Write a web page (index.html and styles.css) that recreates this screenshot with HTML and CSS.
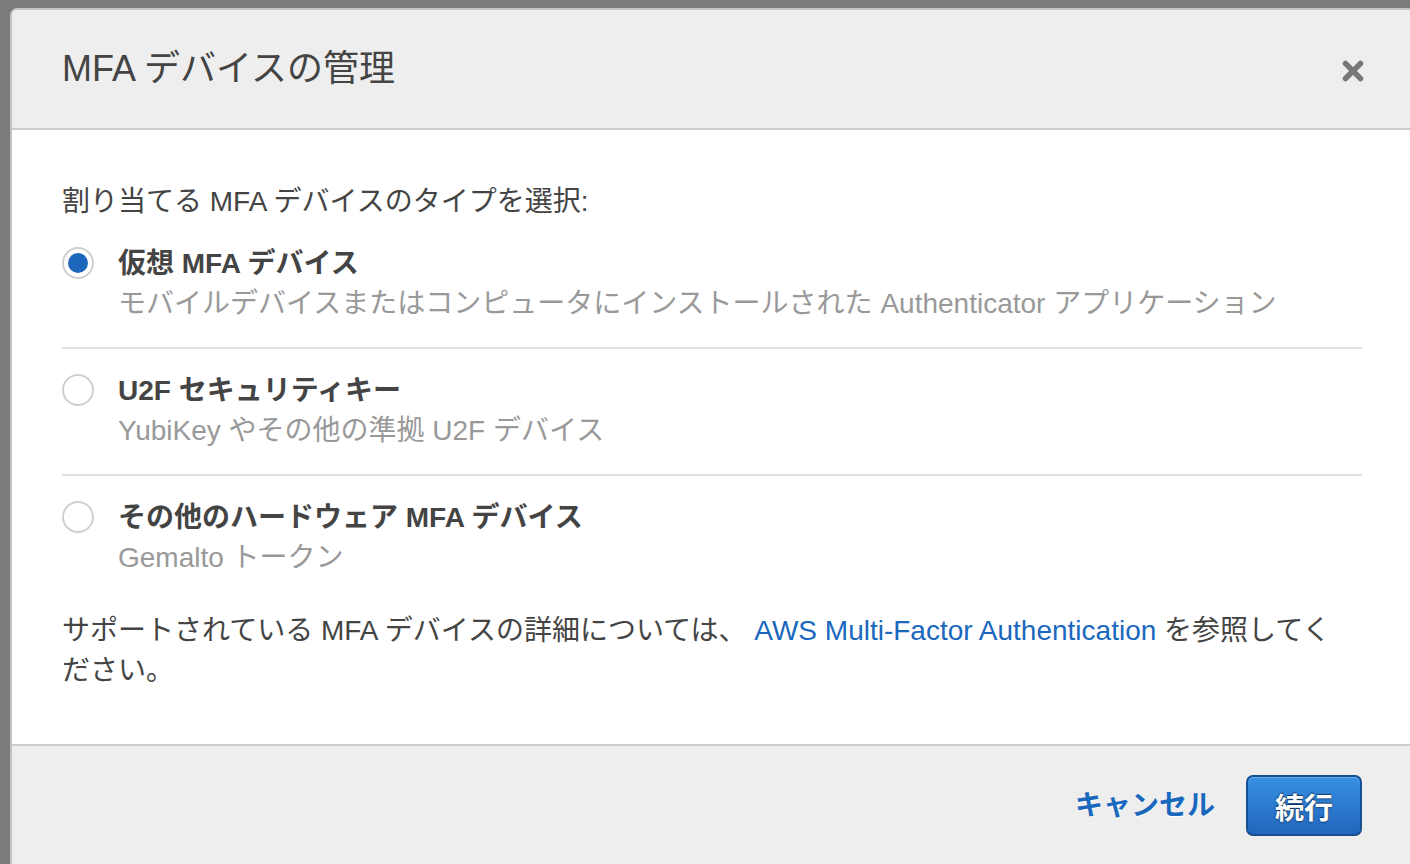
FILE: index.html
```html
<!DOCTYPE html>
<html lang="ja">
<head>
<meta charset="utf-8">
<title>MFA デバイスの管理</title>
<link rel="stylesheet" href="styles.css">
</head>
<body>
<div class="modal">
  <div class="modal-header">
    <h1 class="modal-title">MFA デバイスの管理</h1>
    <button class="close" aria-label="閉じる">
      <svg width="22" height="22" viewBox="0 0 22 22"><path d="M3.5 3.5 L18.5 18.5 M18.5 3.5 L3.5 18.5" stroke="#777" stroke-width="5.5" stroke-linecap="round" fill="none"/></svg>
    </button>
  </div>
  <div class="modal-body">
    <p class="prompt">割り当てる MFA デバイスのタイプを選択:</p>
    <ul class="options">
      <li class="option">
        <span class="radio checked"><span class="dot"></span></span>
        <div class="option-text">
          <div class="option-label">仮想 MFA デバイス</div>
          <div class="option-desc">モバイルデバイスまたはコンピュータにインストールされた Authenticator アプリケーション</div>
        </div>
      </li>
      <li class="option">
        <span class="radio"></span>
        <div class="option-text">
          <div class="option-label">U2F セキュリティキー</div>
          <div class="option-desc">YubiKey やその他の準拠 U2F デバイス</div>
        </div>
      </li>
      <li class="option last">
        <span class="radio"></span>
        <div class="option-text">
          <div class="option-label">その他のハードウェア MFA デバイス</div>
          <div class="option-desc">Gemalto トークン</div>
        </div>
      </li>
    </ul>
    <p class="note">サポートされている MFA デバイスの詳細については、 <a href="#" class="link">AWS Multi-Factor Authentication</a> を参照してください。</p>
  </div>
  <div class="modal-footer">
    <a href="#" class="cancel">キャンセル</a>
    <button class="primary">続行</button>
  </div>
</div>
</body>
</html>
```
FILE: styles.css
```css
html, body {
  margin: 0;
  padding: 0;
  height: 100%;
  overflow: hidden;
}
body {
  background: #7b7b7b;
  font-family: "Liberation Sans", "Noto Sans CJK JP", sans-serif;
  color: #444;
}
.modal {
  margin: 8px 0 0 10px;
  width: 1400px;
  border: 2px solid #c4c4c4;
  border-right: none;
  border-radius: 7px 0 0 0;
  background: #fff;
  overflow: hidden;
}
.modal-header {
  height: 118px;
  background: #eeeeee;
  border-bottom: 2px solid #cccccc;
  display: flex;
  align-items: center;
  justify-content: space-between;
  padding: 0 48px 0 50px;
}
.modal-title {
  margin: 0;
  font-size: 36px;
  font-weight: normal;
  color: #444;
  line-height: 40px;
}
.close {
  border: none;
  background: none;
  padding: 0;
  width: 22px;
  height: 22px;
  display: flex;
  margin-top: 4px;
}
.modal-body {
  padding: 52px 50px 53px 50px;
  width: 1300px;
}
.prompt {
  margin: 0;
  font-size: 28px;
  line-height: 40px;
}
.options {
  list-style: none;
  margin: 0;
  padding: 0;
}
.option {
  display: flex;
  padding: 22px 0 23px 0;
  border-bottom: 2px solid #e0e0e0;
}
.option.last {
  border-bottom: none;
}
.radio {
  box-sizing: border-box;
  width: 32px;
  height: 32px;
  border: 2px solid #cfcfcf;
  border-radius: 50%;
  background: #fff;
  margin-top: 3px;
  margin-right: 24px;
  flex: none;
  display: flex;
  align-items: center;
  justify-content: center;
}
.dot {
  width: 20px;
  height: 20px;
  border-radius: 50%;
  background: #1c67bb;
}
.option-label {
  font-size: 28px;
  font-weight: bold;
  line-height: 40px;
  color: #444;
}
.option-desc {
  font-size: 28px;
  line-height: 40px;
  color: #999;
}
.note {
  margin: 10px 0 0 0;
  max-width: 1285px;
  font-size: 28px;
  line-height: 40px;
  color: #444;
}
.link {
  color: #1a68bd;
  text-decoration: none;
}
.modal-footer {
  border-top: 2px solid #cccccc;
  background: #eeeeee;
  height: 200px;
  display: flex;
  justify-content: flex-end;
  align-items: flex-start;
  padding: 29px 50px 0 0;
}
.cancel {
  color: #1a68bd;
  font-weight: bold;
  font-size: 28px;
  text-decoration: none;
  line-height: 61px;
  margin-right: 31px;
  text-shadow: 0 1px 0 #fff;
}
.primary {
  box-sizing: border-box;
  width: 116px;
  height: 61px;
  border: 2px solid #16508f;
  border-radius: 7px;
  background: linear-gradient(#3890e3, #2266bd);
  color: #fff;
  font-family: inherit;
  font-size: 29px;
  font-weight: bold;
  text-shadow: 0 -1px 1px rgba(0,0,0,0.55), 0 1px 2px rgba(0,0,0,0.4);
  box-shadow: inset 0 1px 0 rgba(255,255,255,0.25);
  padding: 0;
}
```
